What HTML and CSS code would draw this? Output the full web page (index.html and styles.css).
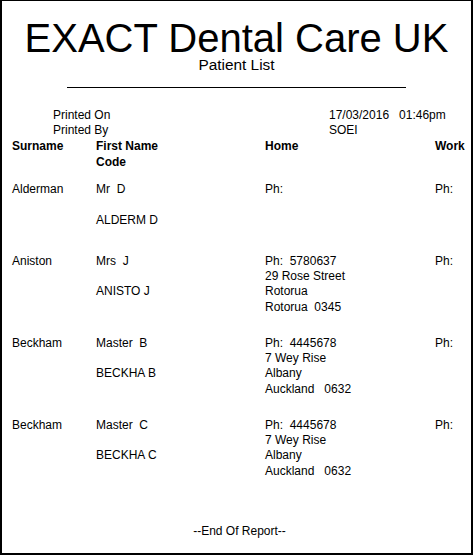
FILE: index.html
```html
<!DOCTYPE html>
<html>
<head>
<meta charset="utf-8">
<title>Patient List</title>
<link rel="stylesheet" href="styles.css">
</head>
<body>
<div class="page">
  <h1 class="title">EXACT Dental Care UK</h1>
  <div class="subtitle">Patient List</div>
  <div class="rule"></div>

  <div class="meta">
    <span>Printed On</span><span class="pre">17/03/2016   01:46pm</span>
    <span>Printed By</span><span>SOEI</span>
  </div>

  <div class="row head">
    <div>Surname</div>
    <div>First Name<br>Code</div>
    <div>Home</div>
    <div>Work</div>
  </div>

  <div class="row rec">
    <div>Alderman</div>
    <div><div class="pre">Mr  D</div><div class="code">ALDERM D</div></div>
    <div class="pre">Ph:</div>
    <div>Ph:</div>
  </div>

  <div class="row rec">
    <div>Aniston</div>
    <div><div class="pre">Mrs  J</div><div class="code">ANISTO J</div></div>
    <div class="pre">Ph:  5780637
29 Rose Street
Rotorua
Rotorua  0345</div>
    <div>Ph:</div>
  </div>

  <div class="row rec">
    <div>Beckham</div>
    <div><div class="pre">Master  B</div><div class="code">BECKHA B</div></div>
    <div class="pre">Ph:  4445678
7 Wey Rise
Albany
Auckland   0632</div>
    <div>Ph:</div>
  </div>

  <div class="row rec">
    <div>Beckham</div>
    <div><div class="pre">Master  C</div><div class="code">BECKHA C</div></div>
    <div class="pre">Ph:  4445678
7 Wey Rise
Albany
Auckland   0632</div>
    <div>Ph:</div>
  </div>

  <div class="end">--End Of Report--</div>
</div>
</body>
</html>
```
FILE: styles.css
```css
html, body {
  margin: 0;
  padding: 0;
  background: #fff;
}

.page {
  box-sizing: border-box;
  width: 473px;
  height: 555px;
  border: 2px solid #000;
  border-top-width: 1px;
  padding-top: 18px;
  font-family: "Liberation Sans", Arial, sans-serif;
  font-size: 12px;
  line-height: 15.33px;
  color: #000;
}

.title {
  margin: 0;
  font-size: 40px;
  line-height: 38px;
  font-weight: normal;
  text-align: center;
}

.subtitle {
  margin-top: 0.5px;
  font-size: 15.4px;
  line-height: 13px;
  text-align: center;
}

.rule {
  width: 339px;
  height: 1px;
  margin: 16.5px auto 0;
  background: #000;
}

.meta {
  display: grid;
  grid-template-columns: 276px auto;
  padding-left: 51px;
  margin-top: 19.8px;
}

.pre {
  white-space: pre;
}

.row {
  display: grid;
  grid-template-columns: 84px 169px 170px 1fr;
  padding-left: 10px;
}

.head {
  font-weight: bold;
  margin-top: 1px;
  margin-bottom: 12px;
}

.rec {
  box-sizing: border-box;
  min-height: 71.7px;
  padding-bottom: 20.7px;
}

.code {
  margin-top: 15.33px;
}

.end {
  margin-top: 24px;
  padding-left: 6px;
  text-align: center;
}
```
